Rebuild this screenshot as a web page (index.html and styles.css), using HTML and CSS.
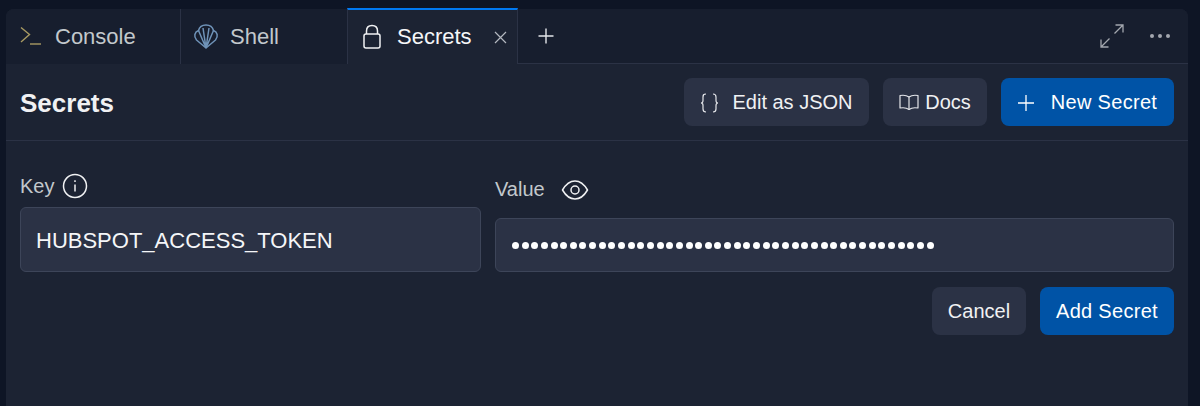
FILE: index.html
```html
<!DOCTYPE html>
<html lang="en">
<head>
    <meta charset="UTF-8">
    <title>Secrets</title>
    <link rel="stylesheet" href="styles.css">
</head>
<body>
    <div class="panel">
        <div class="tabs">
            <div class="tab tab-console">
                <svg class="tab-icon" width="22" height="22" viewBox="0 0 22 22" fill="none" stroke="#a89a62" stroke-width="1.4">
                    <path d="M1 1.5 L9.5 8.5 L1 16"/>
                    <path d="M10 18 H21"/>
                </svg>
                <span>Console</span>
            </div>
            <div class="tab tab-shell">
                <svg class="tab-icon" width="26" height="26" viewBox="0 0 26 26" fill="none" stroke="#6f93b8" stroke-width="1.5" stroke-linejoin="round">
                    <path d="M13 24 L3.5 16 C0.5 12.5 1.5 8 5.5 6.5 C6.5 2.5 9 1 13 1 C17 1 19.5 2.5 20.5 6.5 C24.5 8 25.5 12.5 22.5 16 Z"/>
                    <path d="M13 24 L5.5 6.5 M13 24 L10 4 M13 24 L16 4 M13 24 L20.5 6.5"/>
                </svg>
                <span>Shell</span>
            </div>
            <div class="tab tab-active">
                <svg class="tab-icon" width="20" height="26" viewBox="0 0 20 26" fill="none" stroke="#f0f1f3" stroke-width="1.5" stroke-linejoin="round">
                    <rect x="2" y="10" width="16" height="14" rx="2"/>
                    <path d="M4.5 10 V7 C4.5 3.5 6.5 1.5 10 1.5 C13.5 1.5 15.5 3.5 15.5 7 V10"/>
                </svg>
                <span>Secrets</span>
                <svg class="tab-close" width="13" height="13" viewBox="0 0 13 13" stroke="#b4b8c0" stroke-width="1.2">
                    <path d="M1 1 L12 12 M12 1 L1 12"/>
                </svg>
            </div>
            <div class="tab-rest">
                <svg class="tab-plus" width="16" height="16" viewBox="0 0 16 16" stroke="#e4e6ea" stroke-width="1.4">
                    <path d="M8 0.5 V15.5 M0.5 8 H15.5"/>
                </svg>
                <div class="tab-actions">
                    <svg width="24" height="24" viewBox="0 0 24 24" fill="none" stroke="#a3a7ae" stroke-width="1.3">
                        <path d="M14.5 9.5 L23 1 M15.5 1 H23 V8.5"/>
                        <path d="M9.5 14.5 L1 23 M1 15.5 V23 H8.5"/>
                    </svg>
                    <svg width="22" height="6" viewBox="0 0 22 6" fill="#a3a7ae">
                        <circle cx="3" cy="3" r="2"/>
                        <circle cx="11" cy="3" r="2"/>
                        <circle cx="19" cy="3" r="2"/>
                    </svg>
                </div>
            </div>
        </div>

        <div class="header">
            <h1>Secrets</h1>
            <div class="header-buttons">
                <button class="btn btn-json">
                    <svg width="19" height="20" viewBox="0 0 19 20" fill="none" stroke="#e4e6ea" stroke-width="1.2">
                        <path d="M6 1 C3.5 1 3 2 3 4 V7.5 C3 9 2.5 10 1 10 C2.5 10 3 11 3 12.5 V16 C3 18 3.5 19 6 19"/>
                        <path d="M13 1 C15.5 1 16 2 16 4 V7.5 C16 9 16.5 10 18 10 C16.5 10 16 11 16 12.5 V16 C16 18 15.5 19 13 19"/>
                    </svg>
                    Edit as JSON
                </button>
                <button class="btn btn-docs">
                    <svg width="20" height="18" viewBox="0 0 20 18" fill="none" stroke="#e4e6ea" stroke-width="1.2" stroke-linejoin="round">
                        <path d="M10 3 C8 1.5 4 1 1 1.5 V14 C4 13.5 8 14 10 15.5 C12 14 16 13.5 19 14 V1.5 C16 1 12 1.5 10 3 Z"/>
                        <path d="M10 3 V15.5"/>
                    </svg>
                    Docs
                </button>
                <button class="btn btn-primary btn-new">
                    <svg width="16" height="16" viewBox="0 0 16 16" stroke="#fff" stroke-width="1.3">
                        <path d="M8 0 V16 M0 8 H16"/>
                    </svg>
                    New Secret
                </button>
            </div>
        </div>

        <form class="secret-form">
            <div class="fields">
                <div class="field field-key">
                    <label>Key
                        <svg width="26" height="26" viewBox="0 0 26 26" fill="none" stroke="#f0f1f3" stroke-width="1.5">
                            <circle cx="13" cy="13" r="11.5"/>
                            <path d="M13 11.5 V18.5"/>
                            <path d="M13 7.2 V9"/>
                        </svg>
                    </label>
                    <div class="input">HUBSPOT_ACCESS_TOKEN</div>
                </div>
                <div class="field field-value">
                    <label>Value
                        <svg width="28" height="22" viewBox="0 0 28 22" fill="none" stroke="#f0f1f3" stroke-width="1.5" stroke-linejoin="round">
                            <path d="M1.5 11 C5 5 9 2 14 2 C19 2 23 5 26.5 11 C23 17 19 20 14 20 C9 20 5 17 1.5 11 Z"/>
                            <circle cx="14" cy="11" r="4"/>
                        </svg>
                    </label>
                    <div class="input input-dots"></div>
                </div>
            </div>
            <div class="form-buttons">
                <button type="button" class="btn btn-cancel">Cancel</button>
                <button type="button" class="btn btn-primary btn-add">Add Secret</button>
            </div>
        </form>
    </div>
    <script>
        // the masked value, same dot count as the field
        const dots = document.querySelector('.input-dots');
        for (let i = 0; i < 44; i++) {
            dots.appendChild(document.createElement('i'));
        }
    </script>
</body>
</html>
```

FILE: styles.css
```css
* {
    box-sizing: border-box;
}
html, body {
    height: 100%;
}
body {
    margin: 0;
    padding: 9px 12px 0 6px;
    background-color: #0e1525;
    font-family: "Liberation Sans", Arial, sans-serif;
    font-size: 22px;
    color: #f0f1f3;
    overflow: hidden;
}
.panel {
    height: 100%;
    background-color: #1c2333;
    border-radius: 8px 8px 0 0;
}

/* tab bar */
.tabs {
    display: flex;
    height: 55px;
    background-color: #171e2e;
    border-radius: 8px 8px 0 0;
}
.tab {
    display: flex;
    align-items: center;
    color: #c2c8cc;
}
.tab-console {
    width: 175px;
    padding-left: 14px;
    gap: 13px;
    border-right: 1px solid #2b3245;
}
.tab-shell {
    width: 166px;
    padding-left: 12px;
    gap: 11px;
}
.tab-active {
    width: 171px;
    height: 56px;
    padding-left: 14px;
    gap: 15px;
    color: #f5f6f8;
    background-color: #1c2333;
    border-top: 2px solid #0079f2;
    border-left: 1px solid #2b3245;
    border-right: 1px solid #2b3245;
    margin-top: -1px;
}
.tab-close {
    margin-left: 7px;
}
.tab-rest {
    flex: 1;
    display: flex;
    align-items: center;
    padding: 0 17px 0 20px;
    border-bottom: 1px solid #2b3245;
}
.tab-actions {
    margin-left: auto;
    display: flex;
    align-items: center;
    gap: 25px;
}

/* title row */
.header {
    display: flex;
    align-items: center;
    justify-content: space-between;
    height: 77px;
    padding: 0 14px;
    border-bottom: 1px solid #2b3245;
}
h1 {
    margin: 2px 0 0;
    font-size: 26px;
    font-weight: 700;
}
.header-buttons, .form-buttons {
    display: flex;
    gap: 14px;
}
.btn {
    display: flex;
    align-items: center;
    justify-content: center;
    height: 48px;
    padding: 1px 0 0;
    border: none;
    border-radius: 8px;
    background-color: #2b3245;
    color: #f0f1f3;
    font-family: inherit;
    font-size: 20px;
}
.btn-primary {
    background-color: #0053a6;
    color: #fff;
    letter-spacing: 0.3px;
}
.btn-json {
    width: 185px;
    gap: 13px;
}
.btn-docs {
    width: 104px;
    gap: 6px;
}
.btn-new {
    width: 173px;
    gap: 17px;
}
.btn-cancel {
    width: 94px;
}
.btn-add {
    width: 134px;
}

/* form */
.secret-form {
    padding: 32px 14px 0;
}
.fields {
    display: flex;
    align-items: flex-end;
    gap: 14px;
}
.field-key {
    width: 461px;
}
.field-value {
    flex: 1;
}
label {
    display: flex;
    align-items: center;
    gap: 8px;
    margin-bottom: 8px;
    font-size: 20px;
    color: #c2c8cc;
}
.field-value label {
    gap: 16px;
    margin-bottom: 17px;
}
.input {
    display: flex;
    align-items: center;
    height: 65px;
    padding: 2px 15px 0;
    background-color: #2b3245;
    border: 1px solid #3d4559;
    border-radius: 6px;
    font-size: 22px;
    color: #f5f6f8;
}
.input-dots {
    height: 54px;
    padding: 0 16px;
    gap: 2.65px;
}
.input-dots i {
    width: 7px;
    height: 7px;
    border-radius: 50%;
    background-color: #fff;
}
.form-buttons {
    justify-content: flex-end;
    margin-top: 15px;
}
```
